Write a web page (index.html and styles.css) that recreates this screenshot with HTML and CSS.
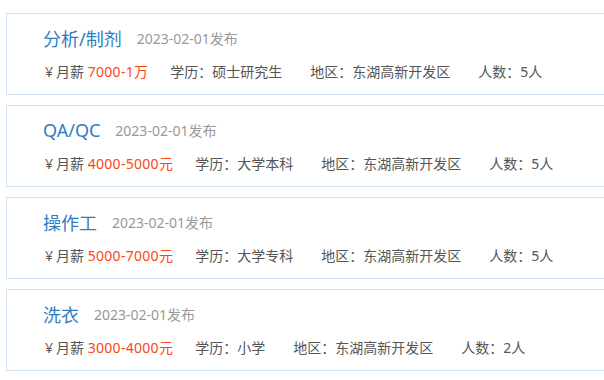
FILE: index.html
```html
<!DOCTYPE html>
<html lang="zh-CN">

<head>
    <meta charset="UTF-8" />
    <meta name="viewport" content="width=device-width, initial-scale=1.0" />
    <title>招聘信息</title>
    <link rel="stylesheet" href="styles.css">
</head>

<body>
    <div class="job-list">
        <div class="job">
            <div class="job-head">
                <span class="job-title">分析/制剂</span>
                <span class="job-date">2023-02-01发布</span>
            </div>
            <div class="job-info">
                <span class="salary"><i>¥</i>月薪 <em>7000-1万</em></span>
                <span class="item">学历：硕士研究生</span>
                <span class="item">地区：东湖高新开发区</span>
                <span class="item">人数：5人</span>
            </div>
        </div>
        <div class="job">
            <div class="job-head">
                <span class="job-title">QA/QC</span>
                <span class="job-date">2023-02-01发布</span>
            </div>
            <div class="job-info">
                <span class="salary"><i>¥</i>月薪 <em>4000-5000元</em></span>
                <span class="item">学历：大学本科</span>
                <span class="item">地区：东湖高新开发区</span>
                <span class="item">人数：5人</span>
            </div>
        </div>
        <div class="job">
            <div class="job-head">
                <span class="job-title">操作工</span>
                <span class="job-date">2023-02-01发布</span>
            </div>
            <div class="job-info">
                <span class="salary"><i>¥</i>月薪 <em>5000-7000元</em></span>
                <span class="item">学历：大学专科</span>
                <span class="item">地区：东湖高新开发区</span>
                <span class="item">人数：5人</span>
            </div>
        </div>
        <div class="job">
            <div class="job-head">
                <span class="job-title">洗衣</span>
                <span class="job-date">2023-02-01发布</span>
            </div>
            <div class="job-info">
                <span class="salary"><i>¥</i>月薪 <em>3000-4000元</em></span>
                <span class="item">学历：小学</span>
                <span class="item">地区：东湖高新开发区</span>
                <span class="item">人数：2人</span>
            </div>
        </div>
    </div>
</body>

</html>
```

FILE: styles.css
```css
body {
    margin: 0;
    font-family: "Noto Sans", "Noto Sans CJK SC", sans-serif;
    background-color: #ffffff;
    overflow: hidden;
}

.job-list {
    padding: 13px 0 0 6px;
    width: 620px;
}

.job {
    border: 1px solid #cfe1f0;
    padding: 12px 0 12px 36px;
    margin-bottom: 10px;
}

.job-head {
    display: flex;
    align-items: center;
    height: 24px;
}

.job-title {
    font-size: 18px;
    color: #2f7dc0;
    margin-right: 15px;
}

.job-date {
    font-size: 14px;
    color: #999999;
}

.job-info {
    display: flex;
    margin-top: 12px;
    padding-left: 2px;
    font-size: 14px;
    line-height: 20px;
    color: #555555;
    white-space: nowrap;
}

.salary {
    margin-right: 22px;
}

.salary i {
    font-style: normal;
    margin-right: 3px;
}

.salary em {
    font-style: normal;
    color: #fa4616;
    letter-spacing: 0.3px;
}

.item {
    margin-right: 28px;
}
```
